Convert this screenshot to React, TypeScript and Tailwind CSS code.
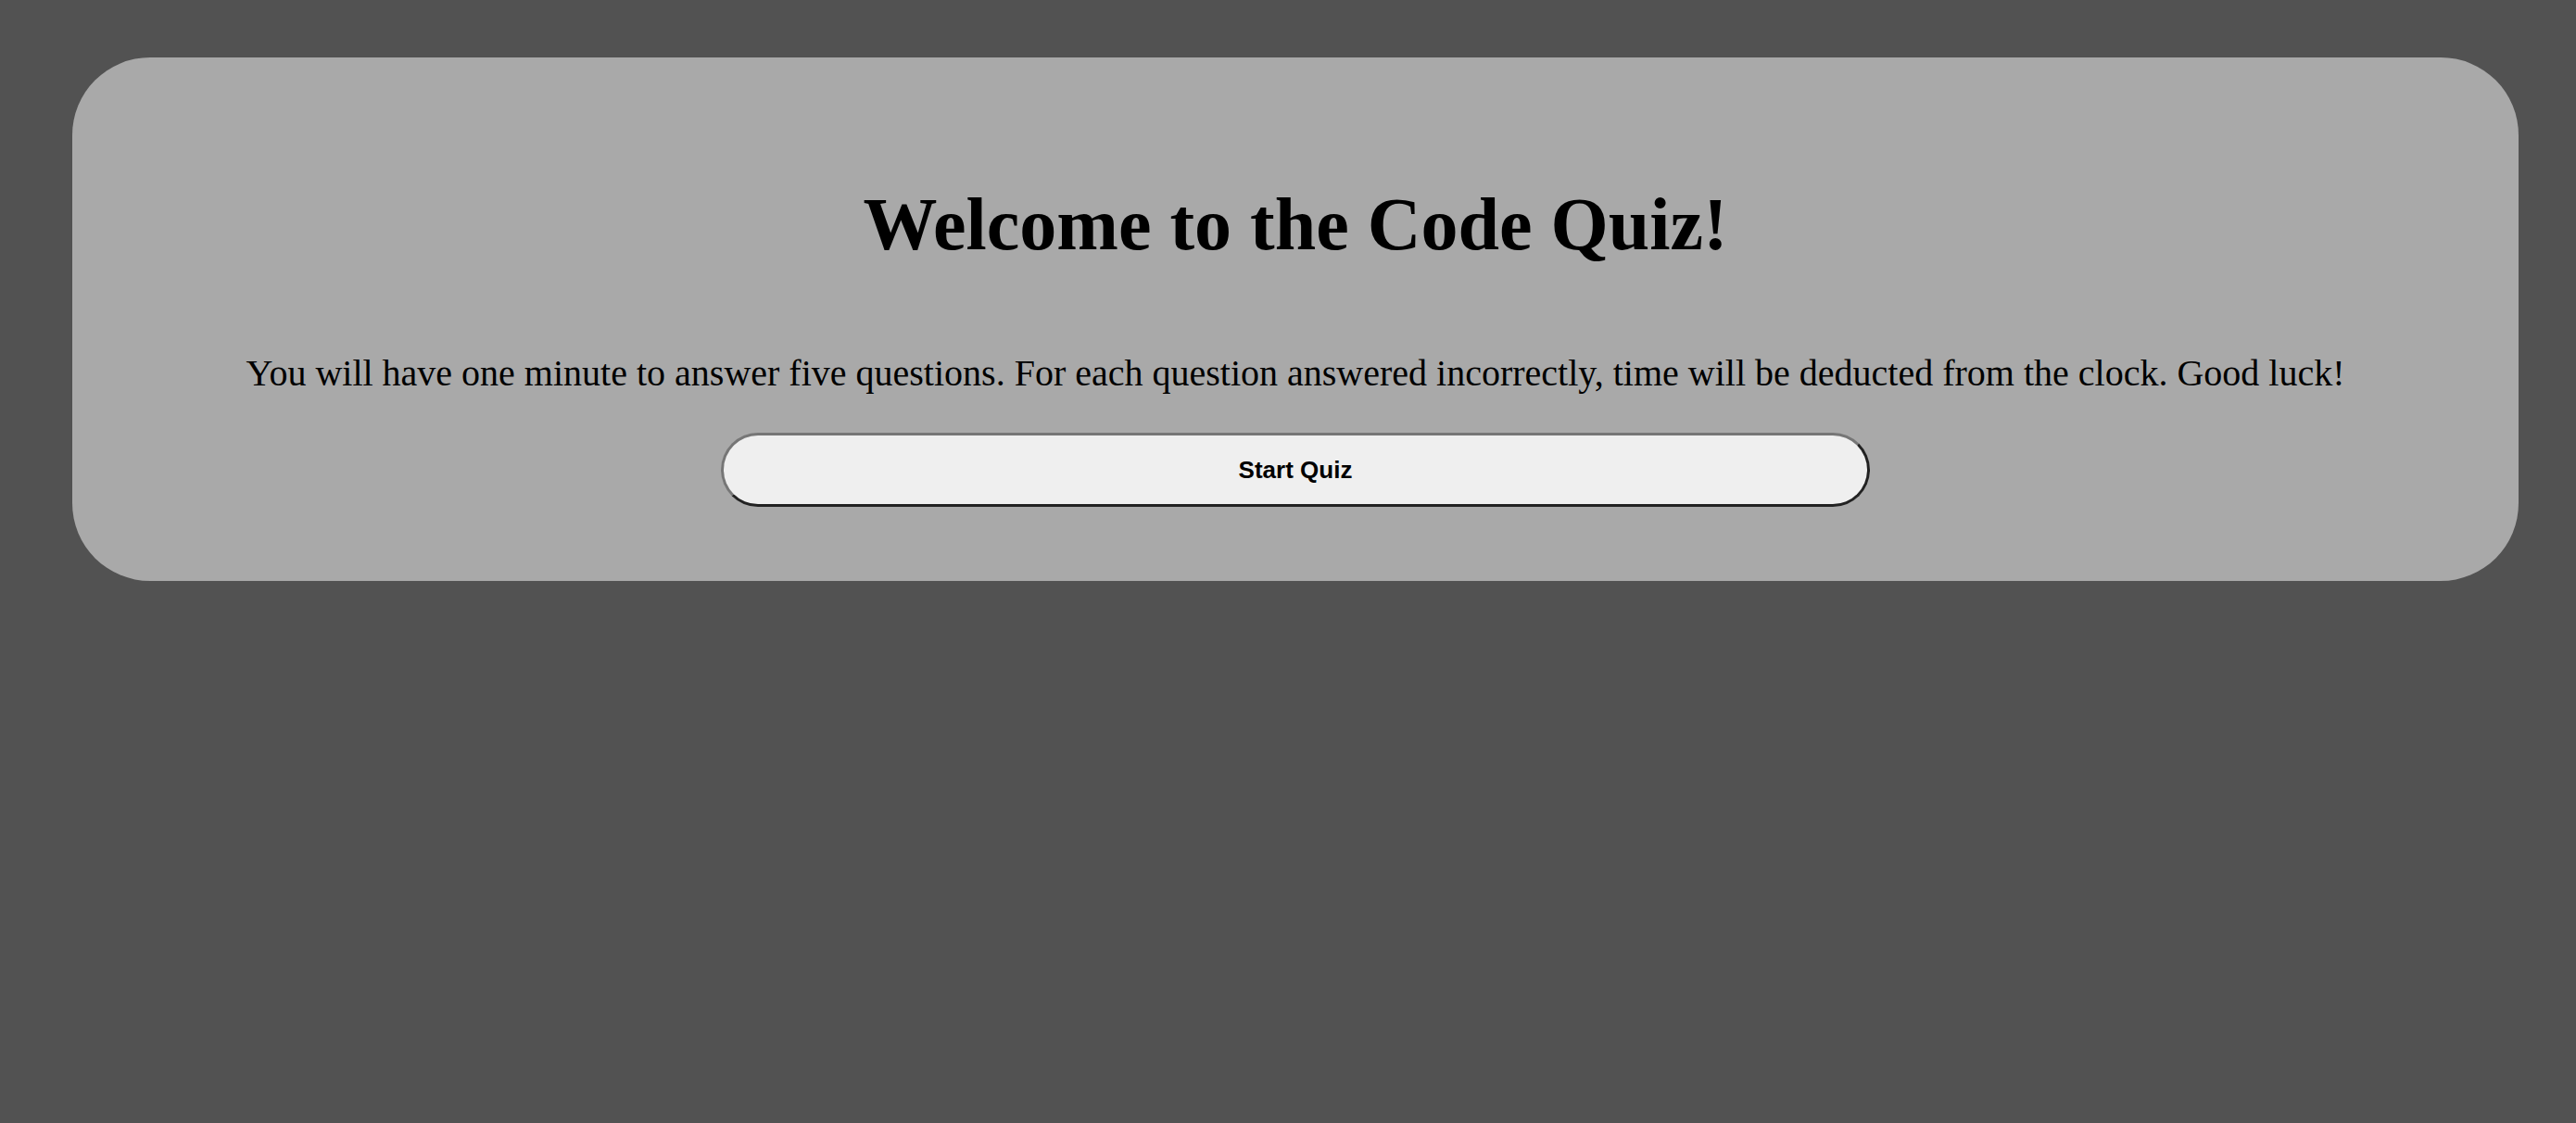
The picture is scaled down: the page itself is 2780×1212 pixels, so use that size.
import React from 'react';

const App: React.FC = () => {
  return (
    <div className="min-h-[1212px] w-full bg-[#525252] pt-[62px] pl-[78px] pr-[62px] font-['Liberation_Serif','Times_New_Roman',serif]">
      <div className="flex flex-col items-center rounded-[84px] bg-[#a9a9a9] px-[80px] pt-[132px] pb-[80px] text-black">
        {/* Heading */}
        <h1 className="mb-[89px] text-[80px] leading-[96px] font-bold">Welcome to the Code Quiz!</h1>

        <p className="mb-[40px] text-center text-[40px] leading-[48px]">
          You will have one minute to answer five questions. For each question answered incorrectly, time will be deducted from the clock. Good luck!
        </p>

        <button className="h-[80px] w-[1240px] rounded-full border-[3px] border-solid border-t-[#767676] border-l-[#767676] border-r-[#222222] border-b-[#222222] bg-[#efefef] font-['Liberation_Sans',Arial,sans-serif] text-[26px] font-bold text-black">
          Start Quiz
        </button>
      </div>
    </div>
  );
};

export default App;
